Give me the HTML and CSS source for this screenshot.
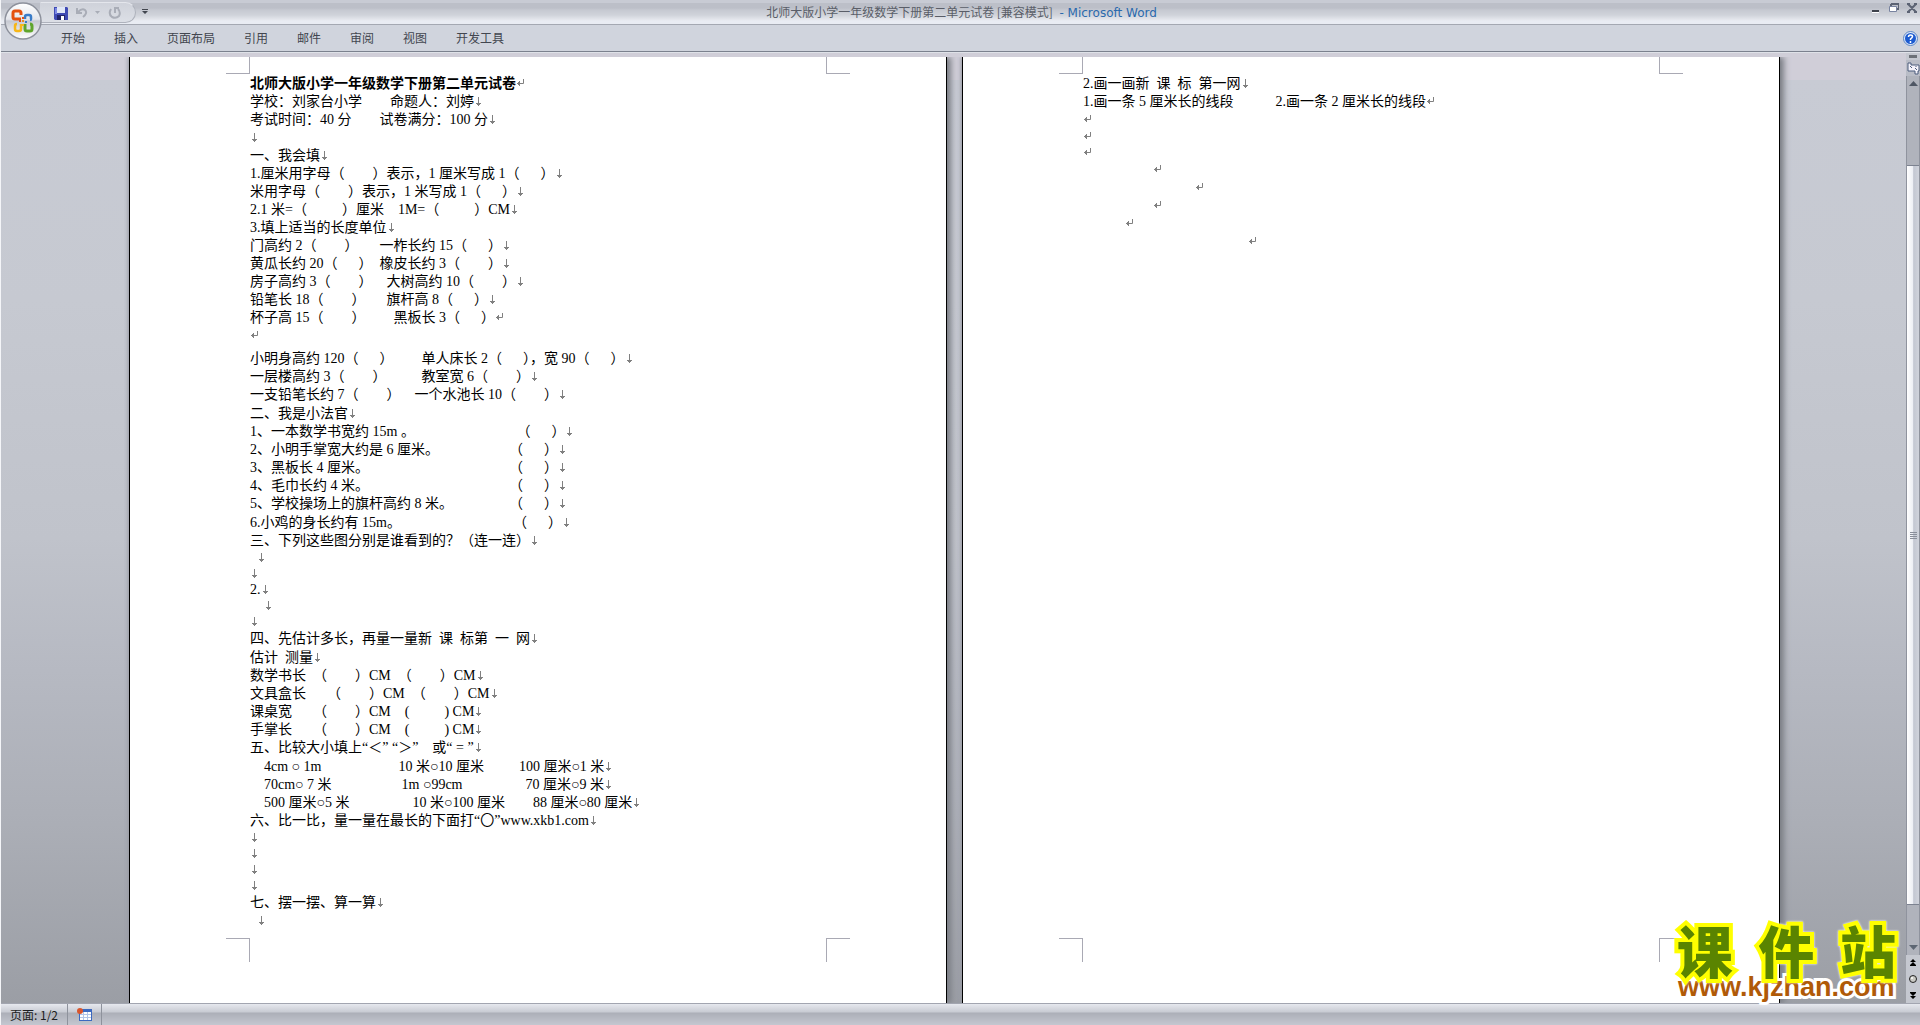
FILE: index.html
```html
<!DOCTYPE html>
<html lang="zh-CN">
<head>
<meta charset="utf-8">
<title>北师大版小学一年级数学下册第二单元试卷 [兼容模式] - Microsoft Word</title>
<link rel="stylesheet" href="styles.css">
</head>
<body>
<svg class="defs" width="0" height="0" aria-hidden="true">
  <symbol id="br" viewBox="0 0 8 10"><path d="M4.5 0v9M2 6.5h5M3 7.5h3M4 8.5h1" fill="none" stroke="#808080"/></symbol>
  <symbol id="pm" viewBox="0 0 8 10"><path d="M7.500 0v4.500H1M1.500 4v1M2.500 3v3M3.500 2v5" fill="none" stroke="#808080"/></symbol>
</svg>

<header class="titlebar">
  <button class="orb" aria-label="Office 按钮">
    <svg width="38" height="38" viewBox="0 0 38 38">
      <defs>
        <linearGradient id="orbfill" x1="0" y1="0" x2="0" y2="1"><stop offset="0" stop-color="#fff"/><stop offset=".45" stop-color="#e4e6ec"/><stop offset=".5" stop-color="#c6c9d2"/><stop offset="1" stop-color="#fff"/></linearGradient>
      </defs>
      <circle cx="19" cy="19" r="18" fill="url(#orbfill)" stroke="#8d919c" stroke-width="1.500"/>
      <g fill="none" stroke-width="3" stroke-linejoin="round">
        <path d="M17 17h-6q-2 0-2-2v-4q0-2 2-2h4q2 0 2 2v2" stroke="#e4500f"/>
        <path d="M21 17v-2q0-2 2-2h2q2 0 2 2v2q0 1-1 1" stroke="#3a7cc8" stroke-width="2.500"/>
        <path d="M17 22v5q0 2-2 2h-2q-2 0-2-2v-3q0-2 2-2" stroke="#f7b718" stroke-width="2.500"/>
        <path d="M21 22v5q0 2 2 2h3q2 0 2-2v-3q0-2-2-2" stroke="#5fa52c"/>
      </g>
      <g fill="#e4500f"><rect x="15" y="18" width="2" height="2"/><rect x="18" y="18" width="2" height="2" fill="#e98b1e"/><rect x="21" y="19" width="2" height="2" fill="#3a7cc8"/><rect x="18" y="15" width="2" height="2"/><rect x="18" y="22" width="2" height="2" fill="#f7b718"/></g>
    </svg>
  </button>
  <div class="qat">
    <button aria-label="保存"><svg width="14" height="14" viewBox="0 0 14 14"><path d="M0 1h13l1 1v12H1l-1-1z" fill="#3f4ab4"/><path d="M1 2h2v6H1z" fill="#7b88e4"/><path d="M3 1h8v6H3z" fill="#dfe6f6"/><path d="M3 9h8v5H3z" fill="#20246c"/><path d="M7 10h3v4H7z" fill="#fff"/></svg></button>
    <button class="undo" aria-label="撤消"><svg width="12" height="11" viewBox="0 0 12 11"><path d="M1 1v5h5M2 5q4-4 7-2 3 3-2 7" fill="none" stroke="#a9adb7" stroke-width="2"/></svg></button>
    <button class="more" aria-label="撤消列表"><svg width="5" height="3" viewBox="0 0 5 3"><path d="M0 0h5L2.500 3z" fill="#a9adb7"/></svg></button>
    <button class="redo" aria-label="重复"><svg width="13" height="12" viewBox="0 0 13 12"><path d="M3 2Q0 7 4 10q4 2 7-1 2-4-1-7M6 1h5M7 1v5" fill="none" stroke="#a9adb7" stroke-width="2"/></svg></button>
  </div>
  <button class="customize" aria-label="自定义快速访问工具栏"><svg width="6" height="6" viewBox="0 0 6 6"><path d="M0 0h6v1H0zM0 2h6L3 5z" fill="#42464f"/></svg></button>
  <div class="caption">北师大版小学一年级数学下册第二单元试卷 [兼容模式] <span class="app"> - Microsoft Word</span></div>
  <div class="controls">
    <button aria-label="最小化"><svg width="10" height="10" viewBox="0 0 10 10"><path d="M1 7h7v2H1z" fill="#3e424c"/><path d="M1 9.500h7" stroke="#fff" fill="none"/></svg></button>
    <button aria-label="向下还原"><svg width="10" height="10" viewBox="0 0 10 10"><path d="M2 1h8v5H8M2 1v2" fill="none" stroke="#5c6374" stroke-width="2"/><path d="M.5 3.500h7v5h-7z" fill="#fff" stroke="#7883a0"/></svg></button>
    <button aria-label="关闭"><svg width="10" height="10" viewBox="0 0 10 10"><path d="M1 1l8 8M9 1L1 9M0 1h3M7 1h3M0 9h3M7 9h3" fill="none" stroke="#5c6374" stroke-width="2"/></svg></button>
  </div>
</header>

<nav class="tabs">
  <button>开始</button><button>插入</button><button>页面布局</button><button>引用</button><button>邮件</button><button>审阅</button><button>视图</button><button>开发工具</button>
  <button class="help" aria-label="帮助"><svg width="15" height="15" viewBox="0 0 15 15"><circle cx="7.500" cy="7.500" r="7" fill="#dfe9f8" stroke="#5d86c4"/><circle cx="7.500" cy="7.500" r="5.500" fill="#1d5bd0"/><path d="M5.500 6q0-2 2-2t2 1.500q0 1-2 2.500v1M7.500 10v2" fill="none" stroke="#fff" stroke-width="1.500"/></svg></button>
</nav>

<div class="workspace">
  <main class="canvas">
    <article class="page">
      <div class="marks top"><i></i><i></i></div>
      <div class="text">
<h1>北师大版小学一年级数学下册第二单元试卷<svg><use href="#pm"/></svg></h1>
<p>学校：刘家台小学        命题人：刘婷<svg><use href="#br"/></svg></p>
<p>考试时间：40 分        试卷满分：100 分<svg><use href="#br"/></svg></p>
<p><svg><use href="#br"/></svg></p>
<p>一、我会填<svg><use href="#br"/></svg></p>
<p>1.厘米用字母（        ）表示，1 厘米写成 1（      ）<svg><use href="#br"/></svg></p>
<p>米用字母（        ）表示，1 米写成 1（      ）<svg><use href="#br"/></svg></p>
<p>2.1 米=（          ）厘米    1M=（          ）CM<svg><use href="#br"/></svg></p>
<p>3.填上适当的长度单位<svg><use href="#br"/></svg></p>
<p>门高约 2（        ）      一柞长约 15（      ）<svg><use href="#br"/></svg></p>
<p>黄瓜长约 20（      ）  橡皮长约 3（        ）<svg><use href="#br"/></svg></p>
<p>房子高约 3（        ）    大树高约 10（        ）<svg><use href="#br"/></svg></p>
<p>铅笔长 18（        ）      旗杆高 8（      ）<svg><use href="#br"/></svg></p>
<p>杯子高 15（        ）        黑板长 3（      ）<svg><use href="#pm"/></svg></p>
<p><svg><use href="#pm"/></svg></p>
<p class="para">小明身高约 120（      ）        单人床长 2（      ），宽 90（      ）<svg><use href="#br"/></svg></p>
<p>一层楼高约 3（        ）          教室宽 6（        ）<svg><use href="#br"/></svg></p>
<p>一支铅笔长约 7（        ）    一个水池长 10（        ）<svg><use href="#br"/></svg></p>
<p class="part">二、我是小法官<svg><use href="#br"/></svg></p>
<p>1、一本数学书宽约 15m 。                             （      ）<svg><use href="#br"/></svg></p>
<p>2、小明手掌宽大约是 6 厘米。                    （      ）<svg><use href="#br"/></svg></p>
<p>3、黑板长 4 厘米。                                        （      ）<svg><use href="#br"/></svg></p>
<p>4、毛巾长约 4 米。                                        （      ）<svg><use href="#br"/></svg></p>
<p>5、学校操场上的旗杆高约 8 米。                （      ）<svg><use href="#br"/></svg></p>
<p class="part">6.小鸡的身长约有 15m。                                （      ）<svg><use href="#br"/></svg></p>
<p>三、下列这些图分别是谁看到的？（连一连）<svg><use href="#br"/></svg></p>
<p class="small">  <svg><use href="#br"/></svg></p>
<p class="small"><svg><use href="#br"/></svg></p>
<p class="small">2.<svg><use href="#br"/></svg></p>
<p class="small">    <svg><use href="#br"/></svg></p>
<p class="small"><svg><use href="#br"/></svg></p>
<p>四、先估计多长，再量一量新  课  标第  一  网<svg><use href="#br"/></svg></p>
<p class="part">估计  测量<svg><use href="#br"/></svg></p>
<p>数学书长  （        ）CM  （        ）CM<svg><use href="#br"/></svg></p>
<p>文具盒长      （        ）CM  （        ）CM<svg><use href="#br"/></svg></p>
<p>课桌宽      （        ）CM    (          ) CM<svg><use href="#br"/></svg></p>
<p>手掌长      （        ）CM    (          ) CM<svg><use href="#br"/></svg></p>
<p>五、比较大小填上“＜” “＞”    或“ = ”<svg><use href="#br"/></svg></p>
<p class="part">    4cm ○ 1m                      10 米○10 厘米          100 厘米○1 米<svg><use href="#br"/></svg></p>
<p>    70cm○ 7 米                    1m ○99cm                  70 厘米○9 米<svg><use href="#br"/></svg></p>
<p>    500 厘米○5 米                  10 米○100 厘米        88 厘米○80 厘米<svg><use href="#br"/></svg></p>
<p>六、比一比，量一量在最长的下面打“〇”www.xkb1.com<svg><use href="#br"/></svg></p>
<p class="small"><svg><use href="#br"/></svg></p>
<p class="small"><svg><use href="#br"/></svg></p>
<p class="small"><svg><use href="#br"/></svg></p>
<p class="small"><svg><use href="#br"/></svg></p>
<p>七、摆一摆、算一算<svg><use href="#br"/></svg></p>
<p>  <svg><use href="#br"/></svg></p>
      </div>
      <div class="marks bottom"><i></i><i></i></div>
    </article>

    <article class="page">
      <div class="marks top"><i></i><i></i></div>
      <div class="text">
<p>2.画一画新  课  标  第一网<svg><use href="#br"/></svg></p>
<p>1.画一条 5 厘米长的线段            2.画一条 2 厘米长的线段<svg><use href="#pm"/></svg></p>
<p><svg><use href="#pm"/></svg></p>
<p class="small"><svg><use href="#pm"/></svg></p>
<p class="small"><svg><use href="#pm"/></svg></p>
<p>                    <svg><use href="#pm"/></svg></p>
<p>                                <svg><use href="#pm"/></svg></p>
<p>                    <svg><use href="#pm"/></svg></p>
<p>            <svg><use href="#pm"/></svg></p>
<p>                                               <svg><use href="#pm"/></svg></p>
      </div>
      <div class="marks bottom"><i></i><i></i></div>
    </article>
  </main>

  <aside class="scroll">
    <div class="split"></div>
    <button class="ruler" aria-label="标尺"><svg width="13" height="13" viewBox="0 0 13 13"><path d="M1 1h3v2h8v6h-1v3H8V9H1z" fill="#f4f2fa" stroke="#4d5c7c"/><path d="M3 4l2 2M8 6l2 2M9 4v1" stroke="#4d5c7c"/></svg></button>
    <div class="track">
      <button class="arrow" aria-label="向上滚动"><svg width="9" height="5" viewBox="0 0 9 5"><path d="M0 5l4.500-5L9 5z" fill="#4f5764"/></svg></button>
      <div class="thumb"><svg width="7" height="7" viewBox="0 0 7 7"><path d="M0 .5h7M0 2.500h7M0 4.500h7M0 6.500h7" stroke="#8a8f9b"/></svg></div>
      <button class="arrow down" aria-label="向下滚动"><svg width="9" height="5" viewBox="0 0 9 5"><path d="M0 0l4.500 5L9 0z" fill="#5d6673"/></svg></button>
    </div>
    <div class="browse">
      <button aria-label="前一页"><svg width="6" height="7" viewBox="0 0 6 7"><path d="M0 3l3-3 3 3zM0 6l3-3 3 3v1H0z"/></svg></button>
      <button aria-label="选择浏览对象"><svg width="8" height="8" viewBox="0 0 8 8"><circle cx="4" cy="4" r="3.500" fill="#c9c9c4" stroke="#222"/><circle cx="3" cy="3" r="1" fill="#fff"/></svg></button>
      <button aria-label="下一页"><svg width="6" height="7" viewBox="0 0 6 7"><path d="M0 0h6v1L3 4 0 1zM0 4h6L3 7z"/></svg></button>
    </div>
  </aside>
</div>

<footer class="status">
  <button class="pages">页面: 1/2</button>
  <button class="macro" aria-label="录制宏"><svg width="15" height="13" viewBox="0 0 15 13"><path d="M2 1h13v12H2z" fill="#3c69c0"/><path d="M3 4h11v8H3z" fill="#fff"/><path d="M3 6.500h11M3 9.500h11M6.500 4v8M10.500 4v8" stroke="#b3c6e8"/><circle cx="3" cy="3" r="3" fill="#d9552c"/></svg></button>
</footer>

<div class="watermark">
  <strong>课  件  站</strong>
  <span>www.kjzhan.com</span>
</div>
</body>
</html>
```
FILE: styles.css
```css
* { box-sizing: border-box; }
body {
  margin: 0;
  min-height: 100vh;
  display: flex;
  flex-direction: column;
  position: relative;
  border-left: 1px solid #f4f5f8;
  background: #d0ced8;
  font: 12px/16px "Noto Sans CJK SC", sans-serif;
  color: #42464f;
}
button {
  display: flex;
  align-items: center;
  justify-content: center;
  padding: 0;
  border: 0;
  background: none;
  font: inherit;
  color: inherit;
}
svg { display: block; flex: none; }
.defs { position: absolute; }

/* title bar */
.titlebar {
  display: flex;
  align-items: flex-start;
  height: 25px;
  border-bottom: 1px solid #a4a8b2;
  background: linear-gradient(#c8cbd4 0 3px, #bcbfc8 3px 8px, #c6c9d1 10px, #d0d3da 15px, #e2e4ea 19px, #e9ecf3 21px);
}
.orb { margin: 2px 0 0 3px; height: 38px; width: 38px; z-index: 1; }
.qat {
  display: flex;
  align-items: center;
  height: 21px;
  width: 96px;
  margin: 2px 0 0 -2px;
  padding-left: 13px;
  border: 1px solid #b4b8c2;
  border-color: #e4e6ec #aeb2bc #aeb2bc transparent;
  border-radius: 0 11px 11px 0;
  background: linear-gradient(#cfd2da, #dcdfe6);
}
.undo { margin-left: 8px; }
.more { margin-left: 7px; }
.redo { margin-left: 8px; }
.customize { margin: 9px 0 0 6px; }
.caption {
  flex: 1;
  padding: 4px 96px 0 0;
  text-align: center;
  white-space: pre;
  color: #5a5e68;
}
.app { color: #2a69ad; font-family: "DejaVu Sans", sans-serif; }
.controls { display: flex; gap: 8px; padding: 3px 3px 0 0; }

/* ribbon tabs */
.tabs {
  display: flex;
  align-items: center;
  gap: 29px;
  height: 27px;
  padding: 0 2px 0 60px;
  border-bottom: 1px solid #7b818e;
  background: #d0d4dd;
}
.tabs .help { margin-left: auto; }

/* document area */
.workspace {
  flex: 1;
  display: flex;
  border-top: 1px solid #dfe2e8;
  background: linear-gradient(#d0ced8 27px, #c8cbd4 27px, #c6c9d1 26%, #c0c3cb 51%, #b6b9c2 65%, #acafb7 80%, #9b9ea5 100%);
}
.canvas {
  flex: 1;
  display: flex;
  justify-content: center;
  gap: 15px;
  margin-top: 4px;
  padding-left: 2px;
}
.page {
  flex: 0 1 818px;
  display: flex;
  flex-direction: column;
  padding-bottom: 41px;
  border: solid #000;
  border-width: 0 1px;
  background: #fff;
  box-shadow: 4px 0 6px #7b7e85, -1px 0 4px #9a9da6;
  clip-path: inset(0 -12px 0 -5px);
}
.marks { display: flex; justify-content: space-between; padding: 0 96px; }
.marks i { width: 24px; border: 0 solid #a9a9b4; }
.marks i:first-child { border-right-width: 1px; }
.marks i:last-child { border-left-width: 1px; }
.top i { height: 17px; border-bottom-width: 1px; }
.bottom { margin-top: auto; }
.bottom i { height: 24px; border-top-width: 1px; }
.text {
  padding: 1px 120px 0;
  font: 14px/18px "Liberation Serif", "Noto Sans CJK SC", serif;
  color: #000;
}
.text h1, .text p { margin: 0; height: 18px; font-size: 14px; white-space: pre; }
.text .small { height: 16px; line-height: 16px; }
.text .para { margin-top: 5px; }
.text .part { margin-top: 1px; }
.text svg { display: inline-block; width: 8px; height: 10px; vertical-align: -1px; }

/* vertical scroll bar */
.scroll { display: flex; flex-direction: column; width: 14px; background: #c5c8d0; }
.split { height: 3px; margin: 2px 3px; background: #6d7178; }
.ruler { height: 16px; background: #b9bcc6; }
.track {
  flex: 1;
  display: flex;
  flex-direction: column;
  border: solid #8f939e;
  border-width: 0 1px;
  background: #b0b3bc;
}
.arrow { height: 15px; }
.thumb {
  flex: 1;
  display: flex;
  align-items: center;
  justify-content: center;
  margin: 74px 0 35px;
  border: solid #7c8290;
  border-width: 1px 0;
  background: linear-gradient(90deg, #fff, #eceef4 50%, #c3c7d2 55%, #d0d3dc);
}
.browse {
  display: flex;
  flex-direction: column;
  justify-content: space-around;
  align-items: center;
  height: 48px;
}

/* status bar */
.status {
  display: flex;
  height: 22px;
  border-top: 1px solid #a2a5b0;
  background: linear-gradient(#e6e8ee, #c8cbd3 8px, #acafb8 9px, #c4c7d0);
  color: #1c1e22;
}
.status button { border-right: 1px solid #8e929c; }
.pages { width: 67px; }
.macro { width: 34px; }

/* site logo over the corner of the window */
.watermark {
  position: absolute;
  right: 24px;
  bottom: 24px;
  display: flex;
  flex-direction: column;
  align-items: center;
}
.watermark strong {
  font-size: 56px;
  line-height: 48px;
  font-weight: 900;
  white-space: pre;
  color: #5a8400;
  -webkit-text-stroke: 8px #ff0;
  paint-order: stroke fill;
  filter: drop-shadow(0 0 1px #fff);
}
.watermark span {
  font: bold 27px/28px "Liberation Sans", sans-serif;
  color: #b05a08;
  -webkit-text-stroke: 6px #fff;
  paint-order: stroke fill;
}
```
